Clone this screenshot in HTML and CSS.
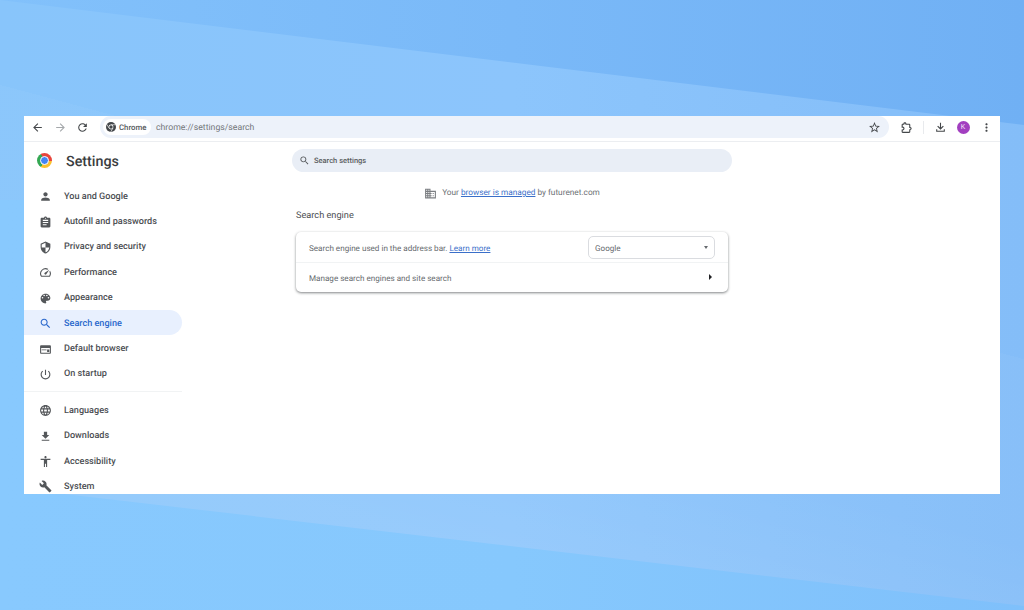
FILE: index.html
```html
<!DOCTYPE html>
<html lang="en">
<head>
    <meta charset="UTF-8">
    <title>Settings - Search engine</title>
    <link rel="stylesheet" href="styles.css">
</head>
<body>
    <svg class="defs" width="0" height="0">
        <symbol id="i-back" viewBox="0 0 24 24"><path d="M20 11H7.83l5.59-5.59L12 4l-8 8 8 8 1.41-1.41L7.83 13H20v-2z"/></symbol>
        <symbol id="i-forward" viewBox="0 0 24 24"><path d="M12 4l-1.41 1.41L16.17 11H4v2h12.17l-5.58 5.59L12 20l8-8z"/></symbol>
        <symbol id="i-reload" viewBox="0 0 24 24"><path d="M17.65 6.35C16.2 4.9 14.21 4 12 4c-4.42 0-7.99 3.58-7.99 8s3.57 8 7.99 8c3.73 0 6.84-2.55 7.73-6h-2.08c-.82 2.33-3.04 4-5.65 4-3.31 0-6-2.69-6-6s2.69-6 6-6c1.66 0 3.14.69 4.22 1.78L13 11h7V4l-2.35 2.35z"/></symbol>
        <symbol id="i-star" viewBox="0 0 24 24"><path d="M22 9.24l-7.19-.62L12 2 9.19 8.63 2 9.24l5.46 4.73L5.82 21 12 17.27 18.18 21l-1.63-7.03L22 9.24zM12 15.4l-3.76 2.27 1-4.28-3.32-2.88 4.38-.38L12 6.1l1.71 4.04 4.38.38-3.32 2.88 1 4.28L12 15.4z"/></symbol>
        <symbol id="i-ext" viewBox="0 0 24 24"><path d="M9 2.500c1.500 0 2.600 1 2.900 2.500H17c1.100 0 2 .9 2 2v4.100c1.500.3 2.500 1.400 2.500 2.900s-1 2.600-2.500 2.900V20c0 1.100-.9 2-2 2H5c-1.100 0-2-.9-2-2v-4.500h1.500c1 0 1.800-.7 1.800-1.500s-.8-1.500-1.800-1.500H3V7c0-1.100.9-2 2-2h1.100C6.400 3.500 7.500 2.500 9 2.500zm0 2C8.400 4.500 8 5 8 5.700V7H5v3.300c2 .2 3.300 1.800 3.300 3.700S7 17.500 5 17.700V20h12v-4.700h1.300c.7 0 1.200-.5 1.200-1.300s-.5-1.300-1.200-1.300H17V7h-7V5.700C10 5 9.600 4.500 9 4.500z"/></symbol>
        <symbol id="i-download" viewBox="0 0 24 24"><path d="M13 3h-2v9.200L7.400 8.600 6 10l6 6 6-6-1.400-1.400-3.600 3.600V3zM4 15v5h16v-5h-2v3H6v-3H4z"/></symbol>
        <symbol id="i-more" viewBox="0 0 24 24"><path d="M12 8c1.100 0 2-.9 2-2s-.9-2-2-2-2 .9-2 2 .9 2 2 2zm0 2c-1.100 0-2 .9-2 2s.9 2 2 2 2-.9 2-2-.9-2-2-2zm0 6c-1.100 0-2 .9-2 2s.9 2 2 2 2-.9 2-2-.9-2-2-2z"/></symbol>
        <symbol id="i-person" viewBox="0 0 24 24"><path d="M12 12c2.210 0 4-1.790 4-4s-1.790-4-4-4-4 1.790-4 4 1.790 4 4 4zm0 2c-2.670 0-8 1.340-8 4v2h16v-2c0-2.660-5.330-4-8-4z"/></symbol>
        <symbol id="i-clipboard" viewBox="0 0 24 24"><path d="M19 3h-4.180C14.400 1.840 13.300 1 12 1c-1.300 0-2.400.84-2.820 2H5c-1.100 0-2 .9-2 2v14c0 1.100.9 2 2 2h14c1.100 0 2-.9 2-2V5c0-1.100-.9-2-2-2zm-7 0c.55 0 1 .45 1 1s-.45 1-1 1-1-.45-1-1 .45-1 1-1zm2 14H7v-2h7v2zm3-4H7v-2h10v2zm0-4H7V7h10v2z"/></symbol>
        <symbol id="i-shield" viewBox="0 0 24 24"><path d="M12 1L3 5v6c0 5.550 3.840 10.740 9 12 5.160-1.260 9-6.450 9-12V5l-9-4zm0 10.990h7c-.53 4.120-3.280 7.790-7 8.940V12H5V6.300l7-3.110v8.800z"/></symbol>
        <symbol id="i-speed" viewBox="0 0 24 24"><path d="M20.380 8.570l-1.230 1.850a8 8 0 0 1-.22 7.580H5.070A8 8 0 0 1 15.580 6.850l1.850-1.230A10 10 0 0 0 3.350 19a2 2 0 0 0 1.720 1h13.850a2 2 0 0 0 1.740-1 10 10 0 0 0-.27-10.440zm-9.790 6.840a2 2 0 0 0 2.830 0l5.660-8.490-8.490 5.660a2 2 0 0 0 0 2.830z"/></symbol>
        <symbol id="i-palette" viewBox="0 0 24 24"><path d="M12 3c-4.970 0-9 4.030-9 9s4.030 9 9 9c.83 0 1.500-.67 1.500-1.500 0-.39-.15-.74-.39-1.010-.23-.26-.38-.61-.38-.99 0-.83.67-1.500 1.500-1.500H16c2.760 0 5-2.240 5-5 0-4.420-4.030-8-9-8zm-5.500 9c-.83 0-1.500-.67-1.500-1.500S5.670 9 6.500 9 8 9.670 8 10.500 7.330 12 6.500 12zm3-4C8.670 8 8 7.330 8 6.500S8.670 5 9.500 5s1.500.67 1.500 1.500S10.330 8 9.500 8zm5 0c-.83 0-1.500-.67-1.500-1.500S13.670 5 14.500 5s1.500.67 1.500 1.500S15.330 8 14.500 8zm3 4c-.83 0-1.500-.67-1.500-1.500S16.670 9 17.500 9s1.500.67 1.500 1.500-.67 1.500-1.500 1.500z"/></symbol>
        <symbol id="i-search" viewBox="0 0 24 24"><path d="M15.500 14h-.79l-.28-.27C15.410 12.590 16 11.110 16 9.500 16 5.910 13.090 3 9.500 3S3 5.910 3 9.500 5.910 16 9.500 16c1.610 0 3.090-.59 4.230-1.570l.27.28v.79l5 4.990L20.490 19l-4.990-5zm-6 0C7.010 14 5 11.990 5 9.500S7.010 5 9.500 5 14 7.010 14 9.500 11.990 14 9.500 14z"/></symbol>
        <symbol id="i-browser" viewBox="0 0 24 24"><path d="M20 4H4c-1.100 0-2 .9-2 2v12c0 1.100.9 2 2 2h16c1.100 0 2-.9 2-2V6c0-1.100-.9-2-2-2zm0 14H4V9h16v9zM5 12h9v1.500H5V12zm10 0h4v4.500h-4V12z"/></symbol>
        <symbol id="i-power" viewBox="0 0 24 24"><path d="M13 3h-2v10h2V3zm4.830 2.170l-1.420 1.420C17.990 7.860 19 9.810 19 12c0 3.870-3.130 7-7 7s-7-3.130-7-7c0-2.190 1.010-4.140 2.580-5.420L6.170 5.170C4.230 6.820 3 9.260 3 12c0 4.970 4.030 9 9 9s9-4.030 9-9c0-2.740-1.230-5.180-3.170-6.830z"/></symbol>
        <symbol id="i-globe" viewBox="0 0 24 24"><path d="M11.990 2C6.470 2 2 6.480 2 12s4.470 10 9.990 10C17.520 22 22 17.520 22 12S17.520 2 11.990 2zm6.930 6h-2.950c-.32-1.250-.78-2.450-1.380-3.560 1.840.63 3.370 1.910 4.330 3.560zM12 4.040c.83 1.200 1.480 2.530 1.910 3.960h-3.820c.43-1.430 1.080-2.760 1.910-3.960zM4.260 14C4.100 13.360 4 12.690 4 12s.1-1.360.26-2h3.380c-.08.66-.14 1.320-.14 2 0 .68.06 1.340.14 2H4.260zm.82 2h2.950c.32 1.250.78 2.450 1.380 3.560-1.840-.63-3.370-1.900-4.330-3.560zm2.950-8H5.080c.96-1.660 2.490-2.930 4.330-3.560C8.810 5.550 8.350 6.750 8.030 8zM12 19.960c-.83-1.200-1.480-2.530-1.910-3.960h3.820c-.43 1.430-1.080 2.760-1.910 3.960zM14.340 14H9.660c-.09-.66-.16-1.320-.16-2 0-.68.07-1.350.16-2h4.680c.09.65.16 1.320.16 2 0 .68-.07 1.340-.16 2zm.25 5.560c.6-1.110 1.060-2.310 1.380-3.560h2.950c-.96 1.650-2.490 2.930-4.330 3.560zM16.360 14c.08-.66.14-1.320.14-2 0-.68-.06-1.340-.14-2h3.380c.16.64.26 1.310.26 2s-.1 1.360-.26 2h-3.380z"/></symbol>
        <symbol id="i-save" viewBox="0 0 24 24"><path d="M19 9h-4V3H9v6H5l7 7 7-7zM5 18v2h14v-2H5z"/></symbol>
        <symbol id="i-access" viewBox="0 0 24 24"><path d="M12 2c1.100 0 2 .9 2 2s-.9 2-2 2-2-.9-2-2 .9-2 2-2zm9 7h-6v13h-2v-6h-2v6H9V9H3V7h18v2z"/></symbol>
        <symbol id="i-wrench" viewBox="0 0 24 24"><path d="M22.700 19l-9.100-9.100c.9-2.300.4-5-1.500-6.900-2-2-5-2.400-7.400-1.300L9 6 6 9 1.600 4.700C.4 7.100.9 10.100 2.900 12.100c1.900 1.900 4.600 2.400 6.900 1.500l9.100 9.100c.4.4 1 .4 1.400 0l2.300-2.300c.5-.4.500-1.100.1-1.400z"/></symbol>
        <symbol id="i-domain" viewBox="0 0 24 24"><path d="M12 7V3H2v18h20V7H12zM6 19H4v-2h2v2zm0-4H4v-2h2v2zm0-4H4V9h2v2zm0-4H4V5h2v2zm4 12H8v-2h2v2zm0-4H8v-2h2v2zm0-4H8V9h2v2zm0-4H8V5h2v2zm10 12h-8v-2h2v-2h-2v-2h2v-2h-2V9h8v10zm-2-8h-2v2h2v-2zm0 4h-2v2h2v-2z"/></symbol>
    </svg>

    <div class="window">
        <div class="toolbar">
            <svg class="tool-icon"><use href="#i-back"/></svg>
            <svg class="tool-icon faded"><use href="#i-forward"/></svg>
            <svg class="tool-icon"><use href="#i-reload"/></svg>
            <div class="omnibox">
                <span class="chip">
                    <svg class="chip-logo" viewBox="0 0 20 20">
                        <circle cx="10" cy="10" r="10" fill="#44474a"/>
                        <path d="M10 5.500h9M6.100 12.300L1.600 4.500M13.900 12.300L9.400 20" stroke="#fff" stroke-width="1.300"/>
                        <circle cx="10" cy="10" r="4.800" fill="#fff"/>
                        <circle cx="10" cy="10" r="3.500" fill="#44474a"/>
                    </svg>
                    Chrome
                </span>
                <span class="url">chrome://settings/search</span>
                <svg class="tool-icon star"><use href="#i-star"/></svg>
            </div>
            <svg class="tool-icon ext"><use href="#i-ext"/></svg>
            <span class="tool-sep"></span>
            <svg class="tool-icon"><use href="#i-download"/></svg>
            <span class="avatar">K</span>
            <svg class="tool-icon"><use href="#i-more"/></svg>
        </div>

        <div class="content">
            <aside class="sidebar">
                <div class="brand">
                    <span class="logo"><span class="logo-dot"></span></span>
                    <span class="brand-name">Settings</span>
                </div>
                <nav class="nav">
                    <a class="nav-item"><svg><use href="#i-person"/></svg>You and Google</a>
                    <a class="nav-item"><svg><use href="#i-clipboard"/></svg>Autofill and passwords</a>
                    <a class="nav-item"><svg><use href="#i-shield"/></svg>Privacy and security</a>
                    <a class="nav-item"><svg><use href="#i-speed"/></svg>Performance</a>
                    <a class="nav-item"><svg><use href="#i-palette"/></svg>Appearance</a>
                    <a class="nav-item active"><svg><use href="#i-search"/></svg>Search engine</a>
                    <a class="nav-item"><svg><use href="#i-browser"/></svg>Default browser</a>
                    <a class="nav-item"><svg><use href="#i-power"/></svg>On startup</a>
                    <div class="nav-sep"></div>
                    <a class="nav-item"><svg><use href="#i-globe"/></svg>Languages</a>
                    <a class="nav-item"><svg><use href="#i-save"/></svg>Downloads</a>
                    <a class="nav-item"><svg><use href="#i-access"/></svg>Accessibility</a>
                    <a class="nav-item"><svg><use href="#i-wrench"/></svg>System</a>
                </nav>
            </aside>

            <main class="main">
                <div class="search">
                    <svg><use href="#i-search"/></svg>
                    <span>Search settings</span>
                </div>
                <div class="managed">
                    <svg><use href="#i-domain"/></svg>
                    <span>Your <a class="link">browser is managed</a> by futurenet.com</span>
                </div>
                <h2 class="section-title">Search engine</h2>
                <div class="card">
                    <div class="row">
                        <span class="row-text">Search engine used in the address bar. <a class="link">Learn more</a></span>
                        <div class="select">Google<span class="caret"></span></div>
                    </div>
                    <div class="row">
                        <span class="row-text">Manage search engines and site search</span>
                        <span class="arrow"></span>
                    </div>
                </div>
            </main>
        </div>
    </div>
</body>
</html>
```

FILE: styles.css
```css
* {
    box-sizing: border-box;
}

body {
    margin: 0;
    height: 610px;
    overflow: hidden;
    padding: 116px 24px 0;
    font-family: Roboto, "Open Sans", sans-serif;
    text-rendering: geometricPrecision;
    color: #3c4043;
    background-image:
        linear-gradient(195deg, transparent 347px, rgba(255, 255, 255, .03) 347px, rgba(255, 255, 255, .03) 520px, rgba(255, 255, 255, .1) 670px),
        linear-gradient(90deg, #88c5fb 0, #8cc5fc 50%, #84bdf8 100%);
}

/* the two darker wedges of the wallpaper */
body::before,
body::after {
    content: "";
    position: absolute;
    inset: 0;
}

body::before {
    clip-path: polygon(0 0, 100% 0, 100% 125px);
    background: linear-gradient(90deg, #82c1fb 0, #7ab9f8 50%, #70b0f4 100%);
}

body::after {
    clip-path: polygon(0 200px, 30px 200px, 30px 490px, 100% 606px, 100% 100%, 0 100%);
    background: linear-gradient(90deg, #88c9fe 0, #86c8fd 50%, #7fc0fb 100%);
}

.defs {
    position: absolute;
}

.window {
    position: relative;
    z-index: 1;
    width: 976px;
    height: 378px;
    background: #fff;
    display: flex;
    flex-direction: column;
    overflow: hidden;
}

/* toolbar */
.toolbar {
    height: 26px;
    flex: none;
    display: flex;
    align-items: flex-start;
    padding-left: 7px;
    border-bottom: 1px solid #eceef1;
}

.tool-icon {
    width: 13px;
    height: 13px;
    margin: 5px 9.5px 0 0;
    flex: none;
    fill: #44474a;
}

.faded {
    fill: #a5a8ab;
}

.omnibox {
    width: 789px;
    height: 22px;
    margin-left: 1.5px;
    display: flex;
    align-items: center;
    padding: 0 8.5px 0 3px;
    background: #edf2fa;
    border-radius: 11px;
    flex: none;
}

.chip {
    height: 16px;
    width: 48px;
    flex: none;
    padding-left: 3px;
    display: flex;
    align-items: center;
    gap: 3px;
    font-size: 7.8px;
    font-weight: 500;
    color: #55585b;
    background: #fff;
    border-radius: 8px;
}

.chip-logo {
    width: 10px;
    height: 10px;
    flex: none;
}

.url {
    flex: 1;
    margin-left: 5px;
    padding-top: 1px;
    font-size: 8.7px;
    color: #74777a;
}

.star {
    margin: 0;
}

.ext {
    margin: 5px 0 0 10.5px;
}

.tool-sep {
    width: 1px;
    height: 13px;
    margin: 5px 9.5px 0 10.500px;
    flex: none;
    background: #e8eaed;
}

.avatar {
    width: 13px;
    height: 13px;
    flex: none;
    margin: 5px 10px 0 .5px;
    border-radius: 50%;
    background: #a23fc0;
    color: #f3e3f8;
    font-size: 7px;
    line-height: 13px;
    text-align: center;
}

/* page */
.content {
    flex: 1;
    display: flex;
    min-height: 0;
}

.sidebar {
    width: 268px;
    flex: none;
}

.brand {
    height: 37px;
    display: flex;
    align-items: center;
    padding-left: 13px;
}

.logo {
    width: 15px;
    height: 15px;
    border-radius: 50%;
    display: flex;
    align-items: center;
    justify-content: center;
    background: conic-gradient(from -30deg, #e8453c 0 120deg, #fbc02d 120deg 240deg, #34a853 240deg 360deg);
}

.logo-dot {
    width: 7px;
    height: 7px;
    border-radius: 50%;
    background: #4285f4;
    border: 1px solid #fff;
    box-sizing: content-box;
}

.brand-name {
    margin: 2px 0 0 14px;
    font-size: 14.3px;
    font-weight: 500;
    color: #3a3d40;
}

.nav {
    width: 158px;
    margin-top: 4px;
    display: flex;
    flex-direction: column;
}

.nav-item {
    height: 25.4px;
    flex: none;
    display: flex;
    align-items: center;
    gap: 12px;
    padding: 2px 0 0 15px;
    font-size: 9.1px;
    font-weight: 500;
    color: #4b4e52;
}

.nav-item svg {
    width: 13px;
    height: 13px;
    flex: none;
    fill: #54575a;
}

.active {
    background: #e8f0fe;
    color: #2a68cc;
    border-radius: 0 13px 13px 0;
}

.active svg {
    fill: #2a68cc;
}

.nav-sep {
    height: 11px;
    flex: none;
    background: linear-gradient(#f1f3f4, #f1f3f4) 0 5px / 100% 1px no-repeat;
}

.main {
    width: 440px;
    padding-top: 7px;
}

.search {
    height: 23px;
    display: flex;
    align-items: center;
    gap: 4px;
    padding: 0 0 1px 7px;
    background: #e9eef6;
    border-radius: 12px;
    font-size: 7.5px;
    font-weight: 500;
    color: #5a5d60;
}

.search svg {
    width: 11px;
    height: 11px;
    fill: #54575a;
}

.managed {
    height: 14px;
    margin-top: 14px;
    display: flex;
    align-items: center;
    justify-content: center;
    gap: 5px;
    font-size: 8.25px;
    color: #6b6f73;
}

.managed svg {
    width: 13px;
    height: 13px;
    fill: #7b7e82;
}

.link {
    color: #3a6fc9;
    text-decoration: underline;
}

.section-title {
    margin: 9px 0 0 4px;
    font-size: 9.2px;
    line-height: 14px;
    font-weight: 400;
    color: #4b4e52;
}

.card {
    width: 432px;
    margin: 9px 0 0 4px;
    background: #fff;
    border-radius: 5px;
    box-shadow: 0 1px 3px rgba(60, 64, 67, .45), 0 1px 2px rgba(60, 64, 67, .25);
    font-size: 8.1px;
    color: #666a6e;
}

.row {
    height: 30px;
    display: flex;
    align-items: center;
    justify-content: space-between;
    padding: 0 13px;
}

.row + .row {
    padding-bottom: 1px;
    border-top: 1px solid #f1f3f4;
}

.row-text {
    padding-top: 1px;
}

.select {
    width: 127px;
    height: 23px;
    display: flex;
    align-items: center;
    justify-content: space-between;
    padding: 1px 6px 0;
    border: 1px solid #dadce0;
    border-radius: 5px;
    color: #666a6e;
}

.caret {
    margin-top: -1px;
    border: 2.5px solid transparent;
    border-top: 3px solid #666a6e;
    border-bottom: 0;
}

.arrow {
    margin-right: 3px;
    border: 3px solid transparent;
    border-left: 3.5px solid #202124;
    border-right: 0;
}
```
